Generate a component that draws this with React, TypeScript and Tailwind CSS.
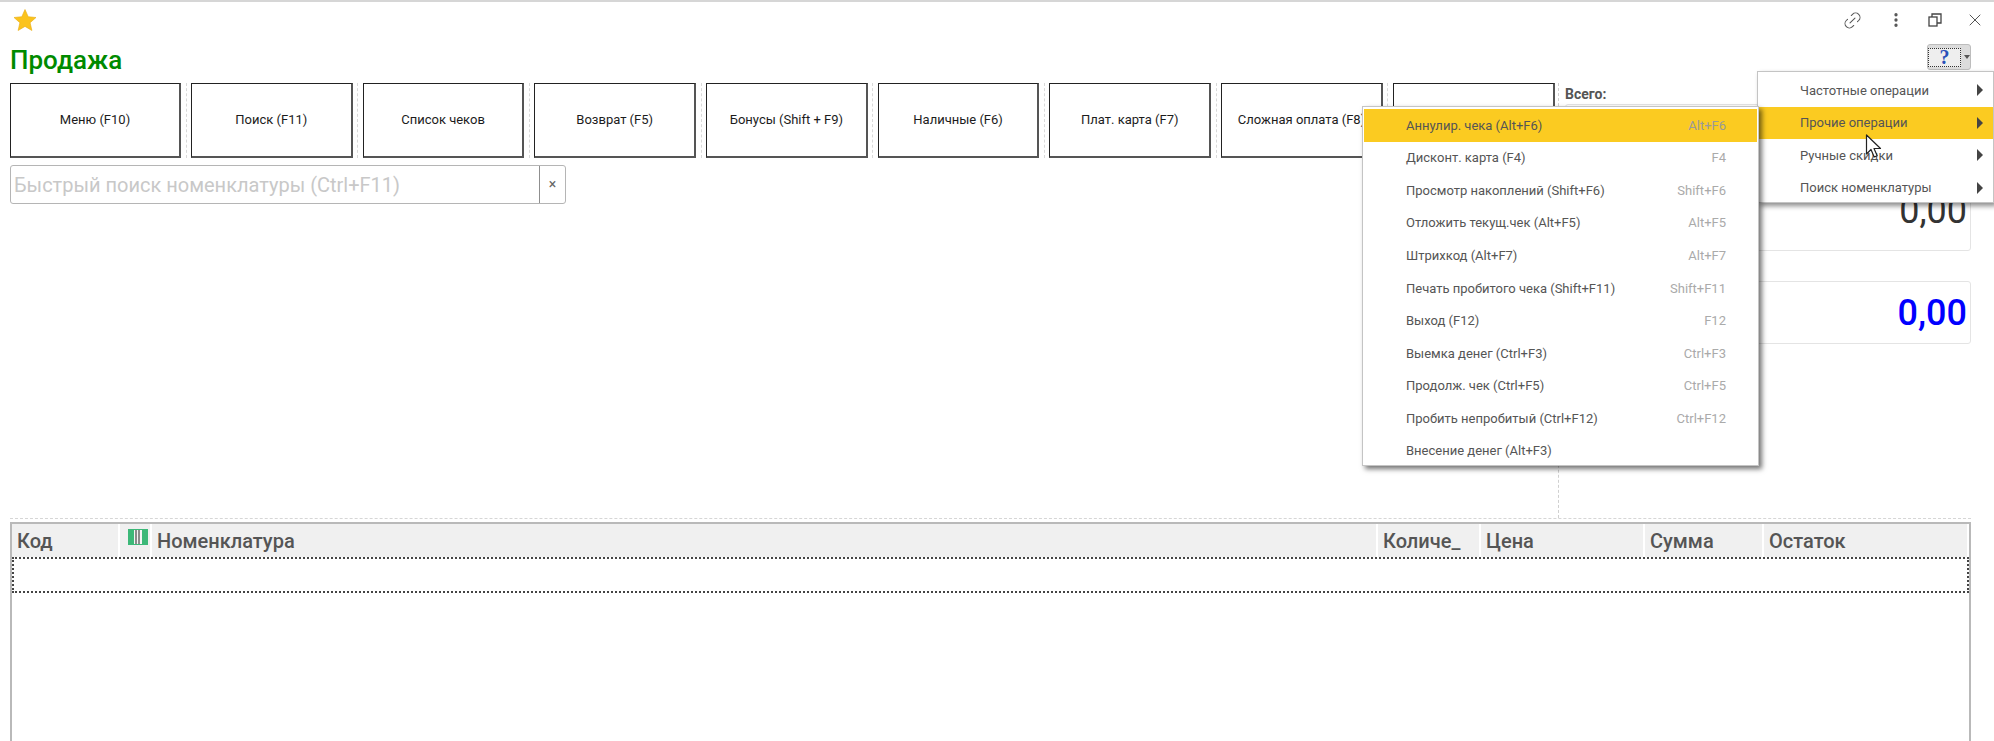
import { Link2, MoreVertical, X } from "lucide-react";

const buttons = ["Поиск (F11)", "Список чеков", "Возврат (F5)", "Бонусы (Shift + F9)", "Наличные (F6)", "Плат. карта (F7)", "Сложная оплата (F8)", ""];

const mainMenu = ["Частотные операции", "Прочие операции", "Ручные скидки", "Поиск номенклатуры"];

const subMenu = [
  ["Аннулир. чека (Alt+F6)", "Alt+F6"],
  ["Дисконт. карта (F4)", "F4"],
  ["Просмотр накоплений (Shift+F6)", "Shift+F6"],
  ["Отложить текущ.чек (Alt+F5)", "Alt+F5"],
  ["Штрихкод (Alt+F7)", "Alt+F7"],
  ["Печать пробитого чека (Shift+F11)", "Shift+F11"],
  ["Выход (F12)", "F12"],
  ["Выемка денег (Ctrl+F3)", "Ctrl+F3"],
  ["Продолж. чек (Ctrl+F5)", "Ctrl+F5"],
  ["Пробить непробитый (Ctrl+F12)", "Ctrl+F12"],
  ["Внесение денег (Alt+F3)", ""],
];

const headCell = "flex items-center pl-[5px] bg-[#f0f0f0] border-r-2 border-white";

function BarcodeIcon() {
  return (
    <svg width="20" height="16" viewBox="0 0 20 16" className="mt-[-7px]">
      <rect width="20" height="16" fill="#3cb878" />
      <rect x="6" y="1" width="8" height="14" fill="#f4f4f4" />
      <path d="M7 2h6M7 4h6M7 6h6M7 8h6M7 10h6M7 12h6M7 14h6" stroke="#222" strokeWidth="1" strokeDasharray="2 1" />
    </svg>
  );
}

function RestoreIcon() {
  return (
    <svg width="14" height="14" viewBox="0 0 14 14" fill="none" stroke="#444" strokeWidth="1.3">
      <rect x="1" y="4" width="8" height="9" />
      <path d="M4 4V1h9v9h-4" />
    </svg>
  );
}

function Cursor() {
  return (
    <svg width="18" height="26" viewBox="0 0 18 26" className="absolute left-[1865px] top-[132px]">
      <path d="M1.5 1v19l4.5-4.5 3.2 7.5 3-1.3-3.2-7.2h6.5z" fill="#fff" stroke="#222" strokeWidth="1.2" strokeLinejoin="round" />
    </svg>
  );
}

export default function App() {
  return (
    <div className="relative w-[1994px] h-[741px] overflow-hidden bg-white border-t-2 border-[#d6d6d6] font-['Roboto',sans-serif]">
      {/* top bar */}
      <div className="flex items-center justify-between h-[36px] pl-[13px] pr-[9px]">
        <svg width="24" height="24" viewBox="0 0 24 24">
          <path d="M12 1.5l3.2 7.2 7.8.8-5.9 5.2 1.8 7.8L12 18.4l-6.9 4.1 1.8-7.8L1 9.5l7.8-.8z" fill="#fbc31c" stroke="#e8ab10" strokeWidth="0.6" />
        </svg>
        <div className="flex items-center gap-[23px] text-[#555]">
          <Link2 size={21} strokeWidth={1.2} className="-rotate-45 mr-[1px]" />
          <MoreVertical size={18} strokeWidth={2.4} />
          <RestoreIcon />
          <X size={20} strokeWidth={1.2} />
        </div>
      </div>

      {/* title */}
      <div className="flex items-start justify-between h-[45px] pl-[10px] pr-[23px]">
        <h1 className="text-[26px] leading-[45px] font-medium text-[#008a00]">Продажа</h1>
        <div className="flex items-center justify-center gap-[3px] w-[44px] h-[26px] mt-[6px] rounded-[3px] bg-[#dcdcdc] border border-[#bdbdbd]">
          <div className="flex items-center justify-center w-[34px] h-[19px] border border-dotted border-[#333] bg-[#eee]">
            <span className="text-[20px] leading-none font-bold text-[#2a50b8] font-['Liberation_Serif',serif]">?</span>
          </div>
          <span className="w-0 h-0 border-x-[3px] border-x-transparent border-t-[4px] border-t-[#555]" />
        </div>
      </div>

      {/* working area */}
      <div className="flex h-[435px] pl-[10px]">
        <div className="w-[1543px]">
          <div className="flex h-[75px]">
            <button className="w-[171px] shrink-0 border border-[#222] border-r-2 border-b-2 border-r-[#555] border-b-[#555] text-[13px] text-[#1c1c1c]">Меню (F10)</button>
            {buttons.map((label, i) => (
              <div key={i} className="flex">
                <div className="flex justify-center w-[10px]">
                  <div className="h-full border-l border-dashed border-[#d9d9d9]" />
                </div>
                <button className="w-[161.7px] border border-[#222] border-r-2 border-b-2 border-r-[#555] border-b-[#555] text-[13px] text-[#1c1c1c]">{label}</button>
              </div>
            ))}
          </div>
          <div className="flex w-[556px] h-[39px] mt-[7px] rounded-[3px] border border-[#b5b5b5]">
            <div className="flex-1 flex items-center pl-[3px] text-[20px] text-[#c8c8c8]">Быстрый поиск номенклатуры (Ctrl+F11)</div>
            <div className="flex items-center justify-center w-[26px] border-l border-[#8f8f8f] text-[14px] text-[#666]">×</div>
          </div>
        </div>
        <div className="ml-[5px] h-full border-l border-dashed border-[#d0d0d0]" />
        <div className="flex-1 pl-[6px] pr-[23px]">
          <div className="h-[21px] pt-[1px] text-[14px] leading-[20px] font-bold text-[#555]">Всего:</div>
          <div className="flex items-center justify-end h-[147px] rounded-[3px] border border-[#e4e4e4] pr-[3px] pt-[66px]">
            <span className="text-[36px] leading-none text-[#333]">0,00</span>
          </div>
          <div className="flex items-center justify-end h-[63px] mt-[30px] rounded-[3px] border border-[#e4e4e4] pr-[3px]">
            <span className="text-[36px] leading-none font-medium text-[#0000ff]">0,00</span>
          </div>
        </div>
      </div>

      {/* table */}
      <div className="ml-[10px] mr-[23px] border-t border-dashed border-[#d6d6d6] pt-[3px]">
        <div className="h-[300px] border-x-2 border-t-2 border-[#b9b9b9]">
          <div className="grid grid-cols-[108px_32px_1226px_103px_164px_119px_1fr] h-[33px] text-[20px] font-medium text-[#555]">
            <div className={headCell}>Код</div>
            <div className={`${headCell} justify-center pl-0`}><BarcodeIcon /></div>
            <div className={headCell}>Номенклатура</div>
            <div className={headCell}>Количе_</div>
            <div className={headCell}>Цена</div>
            <div className={headCell}>Сумма</div>
            <div className={headCell}>Остаток</div>
          </div>
          <div className="h-[36px] border-2 border-dotted border-[#444]" />
        </div>
      </div>

      {/* main popup menu */}
      <div className="absolute left-[1757px] top-[69px] w-[237px] h-[132px] pt-[2px] bg-white border border-[#c4c4c4] shadow-[3px_3px_5px_rgba(0,0,0,0.45)]">
        {mainMenu.map((item, i) => (
          <div key={item} className={`flex items-center justify-between h-[32.5px] pl-[42px] pr-[10px] text-[13px] text-[#555] ${i === 1 ? "bg-[#fbcb21]" : ""}`}>
            <span>{item}</span>
            <span className="w-0 h-0 border-y-[6px] border-y-transparent border-l-[6px] border-l-[#444]" />
          </div>
        ))}
      </div>

      {/* sub menu */}
      <div className="absolute left-[1362px] top-[104px] w-[397px] h-[360px] pt-[2px] px-[1px] bg-white border border-[#c4c4c4] shadow-[3px_3px_5px_rgba(0,0,0,0.55)]">
        {subMenu.map(([name, key], i) => (
          <div key={name} className={`flex items-center justify-between h-[32.6px] pl-[42px] pr-[31px] text-[13px] text-[#555] ${i === 0 ? "bg-[#fbcb21]" : ""}`}>
            <span>{name}</span>
            <span className={i === 0 ? "text-[#999]" : "text-[#aaa]"}>{key}</span>
          </div>
        ))}
      </div>

      <Cursor />
    </div>
  );
}
